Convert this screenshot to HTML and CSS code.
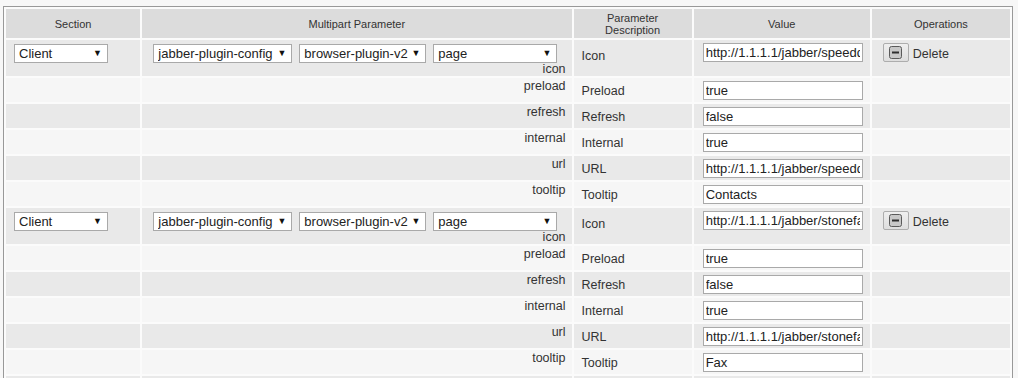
FILE: index.html
```html
<!DOCTYPE html>
<html lang="en">
<head>
    <meta charset="UTF-8">
    <title>Multipart Parameters</title>
    <link rel="stylesheet" href="styles.css">
</head>
<body>
    <div class="panel">
        <table class="params">
            <colgroup>
                <col class="c-section">
                <col class="c-multi">
                <col class="c-desc">
                <col class="c-value">
                <col class="c-ops">
            </colgroup>
            <thead>
                <tr>
                    <th>Section</th>
                    <th>Multipart Parameter</th>
                    <th>Parameter<br>Description</th>
                    <th>Value</th>
                    <th>Operations</th>
                </tr>
            </thead>
            <tbody>
                <tr class="even head-row">
                    <td class="section"><span class="sel w-client"><select><option>Client</option></select></span></td>
                    <td class="multi">
                        <div class="sel-group">
                            <span class="sel w-config"><select><option>jabber-plugin-config</option></select></span>
                            <span class="sel w-plugin"><select><option>browser-plugin-v2</option></select></span>
                            <span class="sel w-page"><select><option>page</option></select></span>
                        </div>
                        <div class="key">icon</div>
                    </td>
                    <td class="desc">Icon</td>
                    <td class="value"><input type="text" value="http://1.1.1.1/jabber/speeddial.png"></td>
                    <td class="ops"><button class="btn-del"><svg width="13" height="13" viewBox="0 0 13 13"><rect x="0.5" y="0.5" width="12" height="12" rx="2" fill="#c8c8c8" stroke="#5a5a5a"/><rect x="3" y="5.5" width="7" height="2" fill="#2e2e2e"/></svg></button><span class="del-label">Delete</span></td>
                </tr>
                <tr class="odd">
                    <td></td><td class="multi"><div class="key">preload</div></td><td class="desc">Preload</td>
                    <td class="value"><input type="text" value="true"></td><td></td>
                </tr>
                <tr class="even">
                    <td></td><td class="multi"><div class="key">refresh</div></td><td class="desc">Refresh</td>
                    <td class="value"><input type="text" value="false"></td><td></td>
                </tr>
                <tr class="odd">
                    <td></td><td class="multi"><div class="key">internal</div></td><td class="desc">Internal</td>
                    <td class="value"><input type="text" value="true"></td><td></td>
                </tr>
                <tr class="even">
                    <td></td><td class="multi"><div class="key">url</div></td><td class="desc">URL</td>
                    <td class="value"><input type="text" value="http://1.1.1.1/jabber/speeddial.html"></td><td></td>
                </tr>
                <tr class="odd">
                    <td></td><td class="multi"><div class="key">tooltip</div></td><td class="desc">Tooltip</td>
                    <td class="value"><input type="text" value="Contacts"></td><td></td>
                </tr>

                <tr class="even head-row">
                    <td class="section"><span class="sel w-client"><select><option>Client</option></select></span></td>
                    <td class="multi">
                        <div class="sel-group">
                            <span class="sel w-config"><select><option>jabber-plugin-config</option></select></span>
                            <span class="sel w-plugin"><select><option>browser-plugin-v2</option></select></span>
                            <span class="sel w-page"><select><option>page</option></select></span>
                        </div>
                        <div class="key">icon</div>
                    </td>
                    <td class="desc">Icon</td>
                    <td class="value"><input type="text" value="http://1.1.1.1/jabber/stonefax.png"></td>
                    <td class="ops"><button class="btn-del"><svg width="13" height="13" viewBox="0 0 13 13"><rect x="0.5" y="0.5" width="12" height="12" rx="2" fill="#c8c8c8" stroke="#5a5a5a"/><rect x="3" y="5.5" width="7" height="2" fill="#2e2e2e"/></svg></button><span class="del-label">Delete</span></td>
                </tr>
                <tr class="odd">
                    <td></td><td class="multi"><div class="key">preload</div></td><td class="desc">Preload</td>
                    <td class="value"><input type="text" value="true"></td><td></td>
                </tr>
                <tr class="even">
                    <td></td><td class="multi"><div class="key">refresh</div></td><td class="desc">Refresh</td>
                    <td class="value"><input type="text" value="false"></td><td></td>
                </tr>
                <tr class="odd">
                    <td></td><td class="multi"><div class="key">internal</div></td><td class="desc">Internal</td>
                    <td class="value"><input type="text" value="true"></td><td></td>
                </tr>
                <tr class="even">
                    <td></td><td class="multi"><div class="key">url</div></td><td class="desc">URL</td>
                    <td class="value"><input type="text" value="http://1.1.1.1/jabber/stonefax.html"></td><td></td>
                </tr>
                <tr class="odd">
                    <td></td><td class="multi"><div class="key">tooltip</div></td><td class="desc">Tooltip</td>
                    <td class="value"><input type="text" value="Fax"></td><td></td>
                </tr>
                <tr class="even">
                    <td></td><td></td><td></td><td></td><td></td>
                </tr>
            </tbody>
        </table>
    </div>
</body>
</html>
```

FILE: styles.css
```css
body {
    margin: 0;
    background: #f7f7f7;
    font-family: 'Liberation Sans', Arial, sans-serif;
    color: #333;
    overflow: hidden;
}

.panel {
    margin: 6px 0 0 3px;
    width: 1008px;
    border: 1px solid #999;
    border-bottom: none;
    background: #fbfbfb;
}

.params {
    table-layout: fixed;
    width: 100%;
    border-spacing: 2px;
    font-size: 12.5px;
}

.c-section { width: 134px; }
.c-multi { width: 429px; }
.c-desc { width: 118px; }
.c-value { width: 176px; }
.c-ops { width: 138px; }

th {
    box-sizing: border-box;
    background: #dcdcdc;
    font-weight: normal;
    font-size: 11px;
    line-height: 12px;
    height: 29px;
    padding: 0;
    color: #333;
}

td {
    box-sizing: border-box;
    padding: 0;
    vertical-align: top;
    height: 24px;
    line-height: 16px;
}

tr.even td { background: #e9e9e9; }
tr.odd td { background: #f6f6f6; }

tr.head-row td { height: 36px; }

.section {
    padding: 4px 0 0 8px;
}

.multi {
    text-align: right;
    padding: 0 6px 0 0;
}

.sel-group {
    display: flex;
    justify-content: center;
    gap: 7px;
    padding: 4px 0 0 3px;
    height: 19px;
}

.key {
    padding-top: 0;
    height: 16px;
}

.head-row .key {
    height: 13px;
    line-height: 13px;
}

.sel {
    position: relative;
    display: block;
    height: 19px;
}

.sel::after {
    content: '▼';
    position: absolute;
    right: 6px;
    top: 2px;
    font-size: 9px;
    line-height: 14px;
    color: #111;
    pointer-events: none;
}

.sel select {
    -webkit-appearance: none;
    appearance: none;
    display: block;
    width: 100%;
    height: 19px;
    margin: 0;
    padding: 0 14px 0 4px;
    border: 1px solid #a9a9a9;
    border-radius: 0;
    background: #fff;
    font-family: inherit;
    font-size: 13px;
    color: #222;
}

.w-client { width: 94px; }
.w-config { width: 139px; }
.w-plugin { width: 127px; }
.w-page { width: 124px; }

.desc {
    padding: 5px 0 0 8px;
}

.head-row .desc {
    padding-top: 8px;
}

.value {
    padding: 3px 0 0 9px;
}

.value input {
    display: block;
    box-sizing: border-box;
    width: 160px;
    height: 19px;
    margin: 0;
    padding: 0 2px;
    border: 1px solid #a9a9a9;
    background: #fff;
    font-family: inherit;
    font-size: 13px;
    color: #222;
}

.ops {
    padding: 3px 0 0 11px;
    white-space: nowrap;
}

.btn-del {
    display: inline-flex;
    align-items: center;
    justify-content: center;
    width: 26px;
    height: 19px;
    padding: 0;
    margin: 0;
    vertical-align: top;
    border: 1px solid #adadad;
    border-radius: 2px;
    background: linear-gradient(#efefef, #dedede);
}

.del-label {
    display: inline-block;
    margin-left: 4px;
    padding-top: 2px;
    line-height: 19px;
    vertical-align: top;
}
```
